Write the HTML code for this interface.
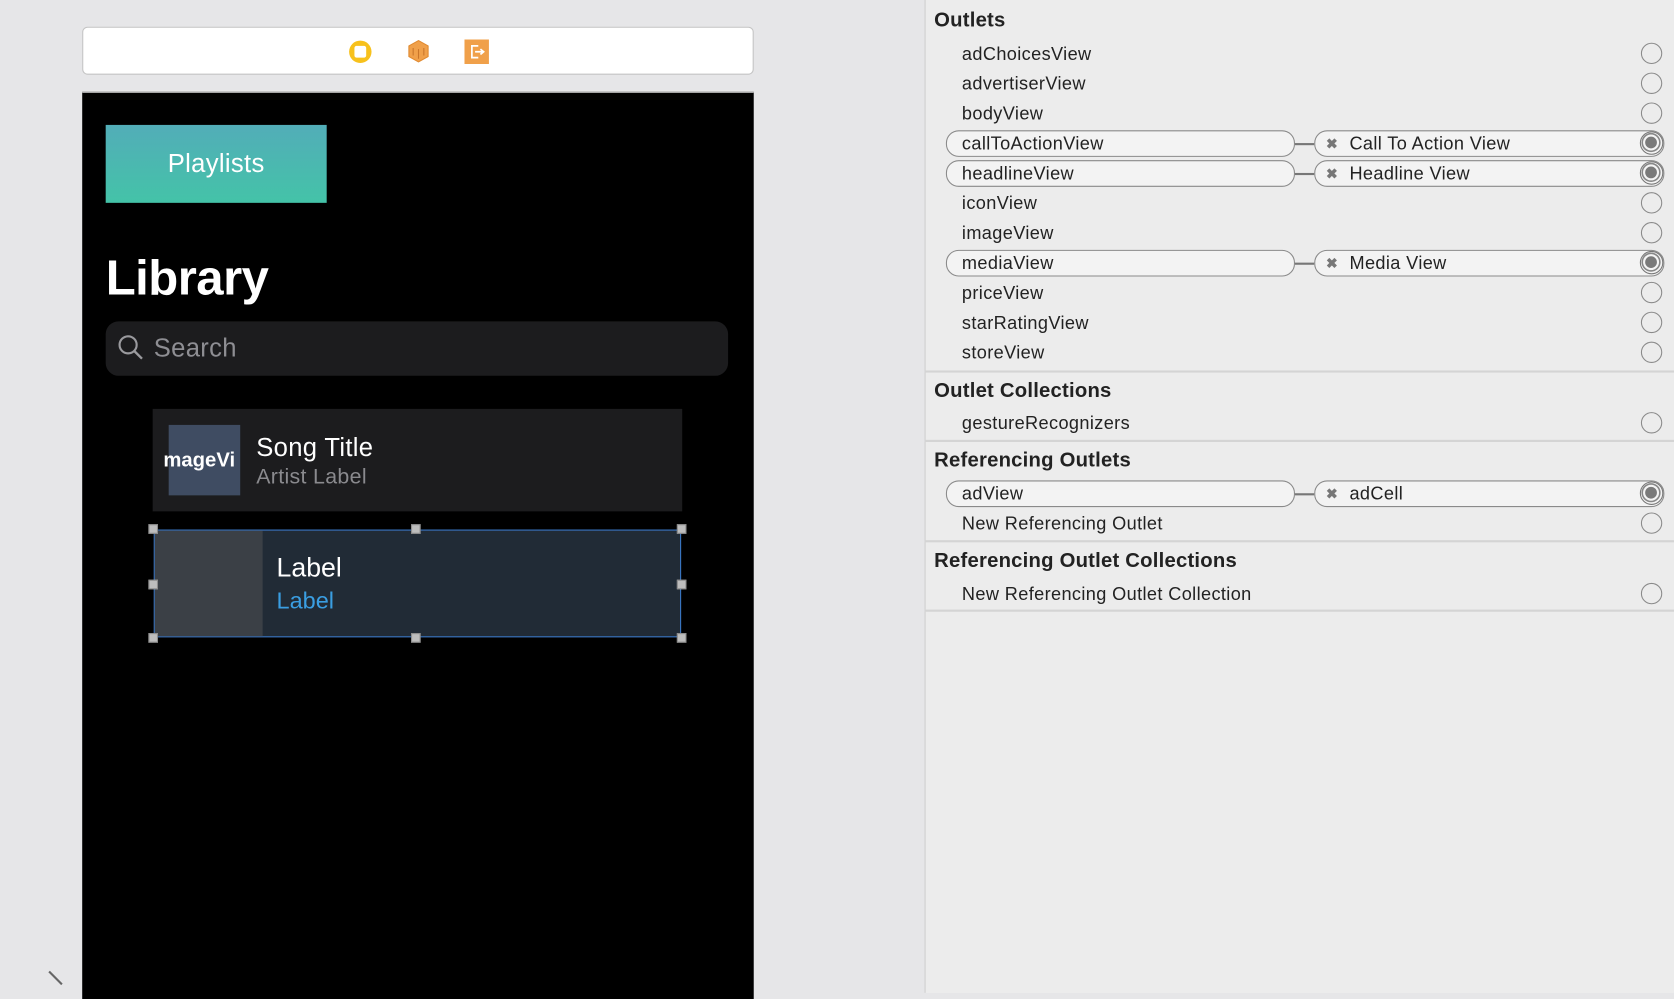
<!DOCTYPE html>
<html><head><meta charset="utf-8"><style>
*{margin:0;padding:0;box-sizing:border-box}
html,body{width:1674px;height:984px;overflow:hidden;background:#e6e6e8;font-family:"Liberation Sans",sans-serif}
#w{position:absolute;left:0;top:0;width:1568px;height:930px;transform:scale(1.06760);transform-origin:0 0}
.a{position:absolute}
.t{position:absolute;white-space:nowrap}
.row{position:absolute;left:901px;font-size:17px;color:#222;line-height:20px;letter-spacing:0.35px;margin-top:1px}
.hd{position:absolute;left:875px;font-size:19px;font-weight:bold;color:#222;line-height:22px;margin-top:1px;letter-spacing:0.2px}
.c{position:absolute;left:1537px;width:20px;height:20px;border:1.5px solid #8a8a8a;border-radius:50%}
.cf{position:absolute;left:1536px;width:22px;height:22px;border:1.5px solid #777;border-radius:50%;background:#f4f4f4}
.cf:after{content:"";position:absolute;left:4px;top:4px;width:11px;height:11px;border-radius:50%;background:#7a7a7a;box-shadow:0 0 0 2px #f4f4f4,0 0 0 3.5px #888}
.pl{position:absolute;left:886px;width:327px;height:25px;border:1.5px solid #8a8a8a;border-radius:12px;background:#f3f3f3}
.pr{position:absolute;left:1231px;width:328px;height:25px;border:1.5px solid #8a8a8a;border-radius:12px;background:#f3f3f3}
.ln{position:absolute;left:1213px;width:18px;height:1.5px;background:#777}
.x{position:absolute;left:1242px;font-size:13px;color:#777;font-weight:bold}
.sep{position:absolute;left:866px;width:702px;height:1.5px;background:#d4d4d4}
.h{position:absolute;width:9px;height:9px;background:#bdbdbd;border:1px solid #8c8c8c}
</style></head><body><div id="w">
<div class="a" style="left:77px;top:25px;width:629px;height:45px;background:#fff;border:1px solid #c4c4c4;border-radius:5px"></div>
<div class="a" style="left:327px;top:38px;width:21px;height:21px;border-radius:50%;background:#f7c11c"></div>
<div class="a" style="left:332px;top:43px;width:11px;height:11px;border-radius:2px;background:#fff"></div>
<svg class="a" style="left:381px;top:37px" width="22" height="22" viewBox="0 0 22 22"><polygon points="11,1 20,6 20,16 11,21 2,16 2,6" fill="#f0a04a" stroke="#e08a30"/><path d="M11,9 V18 M6,8 V15 M16,8 V15" stroke="#c9752a" stroke-width="1"/></svg>
<svg class="a" style="left:435px;top:37px" width="23" height="23" viewBox="0 0 23 23"><rect x="0" y="0" width="23" height="23" fill="#f0a04a"/><path d="M13,6 H7 V17 H13 M10,11.5 H18 M15,9 L18,11.5 L15,14" stroke="#fff" stroke-width="1.6" fill="none"/></svg>
<div class="a" style="left:77px;top:86px;width:629px;height:850px;background:#000;border-top:1.5px solid #bbb"></div>
<div class="a" style="left:99px;top:117px;width:207px;height:73px;background:linear-gradient(180deg,#52adb8,#44c3a8)"></div>
<div class="t" style="left:99px;top:140px;width:207px;text-align:center;color:#fff;font-size:24px;letter-spacing:0.3px">Playlists</div>
<div class="t" style="left:99px;top:233px;color:#fff;font-size:46px;font-weight:bold;letter-spacing:-0.5px">Library</div>
<div class="a" style="left:99px;top:301px;width:583px;height:51px;background:#1c1c1e;border-radius:12px"></div>
<svg class="a" style="left:110px;top:313px" width="26" height="26" viewBox="0 0 26 26"><circle cx="10" cy="10" r="8" stroke="#9a9a9e" stroke-width="2" fill="none"/><path d="M16,16 L23,23" stroke="#9a9a9e" stroke-width="2.2"/></svg>
<div class="t" style="left:144px;top:313px;color:#8e8e93;font-size:24px;letter-spacing:0.3px">Search</div>
<div class="a" style="left:143px;top:383px;width:496px;height:96px;background:#1c1c1e"></div>
<div class="a" style="left:158px;top:398px;width:67px;height:66px;background:#3f4c62"></div>
<div class="t" style="left:153px;top:421px;color:#fff;font-size:19px;font-weight:bold">mageVi</div>
<div class="t" style="left:240px;top:406px;color:#fff;font-size:24px;letter-spacing:0.3px">Song Title</div>
<div class="t" style="left:240px;top:436px;color:#8a8a8e;font-size:20px;letter-spacing:0.3px">Artist Label</div>
<div class="a" style="left:144px;top:496px;width:494px;height:101px;background:#212b36;border:1.5px solid #3a78c8"></div>
<div class="a" style="left:145px;top:497px;width:101px;height:99px;background:#3b4046"></div>
<div class="t" style="left:259px;top:518px;color:#fff;font-size:25px">Label</div>
<div class="t" style="left:259px;top:550px;color:#3a9ee2;font-size:22px">Label</div>
<div class="h" style="left:139px;top:491px"></div><div class="h" style="left:385px;top:491px"></div><div class="h" style="left:634px;top:491px"></div>
<div class="h" style="left:139px;top:543px"></div><div class="h" style="left:634px;top:543px"></div>
<div class="h" style="left:139px;top:593px"></div><div class="h" style="left:385px;top:593px"></div><div class="h" style="left:634px;top:593px"></div>
<svg class="a" style="left:44px;top:908px" width="20" height="16"><path d="M2,2 L14,14" stroke="#666" stroke-width="2"/></svg>
<div class="a" style="left:866px;top:0;width:702px;height:930px;background:#ececec;border-left:1.5px solid #cfcfcf"></div>
<div class="hd" style="top:8px">Outlets</div>
<div class="pl" style="top:122px"></div><div class="ln" style="top:134px"></div><div class="pr" style="top:122px"></div>
<div class="pl" style="top:150px"></div><div class="ln" style="top:162px"></div><div class="pr" style="top:150px"></div>
<div class="pl" style="top:234px"></div><div class="ln" style="top:246px"></div><div class="pr" style="top:234px"></div>
<div class="pl" style="top:450px"></div><div class="ln" style="top:462px"></div><div class="pr" style="top:450px"></div>
<div class="row" style="top:40px">adChoicesView</div><div class="c" style="top:40px"></div>
<div class="row" style="top:68px">advertiserView</div><div class="c" style="top:68px"></div>
<div class="row" style="top:96px">bodyView</div><div class="c" style="top:96px"></div>
<div class="row" style="top:124px">callToActionView</div><div class="x" style="top:127px">✖</div><div class="row" style="left:1264px;top:124px">Call To Action View</div><div class="cf" style="top:123px"></div>
<div class="row" style="top:152px">headlineView</div><div class="x" style="top:155px">✖</div><div class="row" style="left:1264px;top:152px">Headline View</div><div class="cf" style="top:151px"></div>
<div class="row" style="top:180px">iconView</div><div class="c" style="top:180px"></div>
<div class="row" style="top:208px">imageView</div><div class="c" style="top:208px"></div>
<div class="row" style="top:236px">mediaView</div><div class="x" style="top:239px">✖</div><div class="row" style="left:1264px;top:236px">Media View</div><div class="cf" style="top:235px"></div>
<div class="row" style="top:264px">priceView</div><div class="c" style="top:264px"></div>
<div class="row" style="top:292px">starRatingView</div><div class="c" style="top:292px"></div>
<div class="row" style="top:320px">storeView</div><div class="c" style="top:320px"></div>
<div class="sep" style="top:347px"></div>
<div class="hd" style="top:355px">Outlet Collections</div>
<div class="row" style="top:386px">gestureRecognizers</div><div class="c" style="top:386px"></div>
<div class="sep" style="top:412px"></div>
<div class="hd" style="top:420px">Referencing Outlets</div>
<div class="row" style="top:452px">adView</div><div class="x" style="top:455px">✖</div><div class="row" style="left:1264px;top:452px">adCell</div><div class="cf" style="top:451px"></div>
<div class="row" style="top:480px">New Referencing Outlet</div><div class="c" style="top:480px"></div>
<div class="sep" style="top:506px"></div>
<div class="hd" style="top:514px">Referencing Outlet Collections</div>
<div class="row" style="top:546px">New Referencing Outlet Collection</div><div class="c" style="top:546px"></div>
<div class="sep" style="top:571px"></div>
</div></body></html>
